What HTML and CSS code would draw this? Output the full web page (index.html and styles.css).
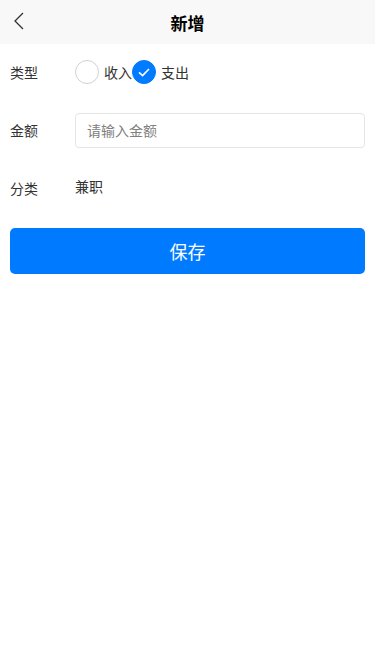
FILE: index.html
```html
<!DOCTYPE html>
<html lang="zh-CN">
<head>
  <meta charset="UTF-8" />
  <meta name="viewport" content="width=device-width, initial-scale=1.0"/>
  <title>新增</title>
  <link rel="stylesheet" href="styles.css">
</head>
<body>
  <header class="nav-bar">
    <a class="nav-back" href="#">
      <svg width="14" height="18" viewBox="0 0 14 18"><path d="M11 1 L3 9 L11 17" fill="none" stroke="#333" stroke-width="1.3"/></svg>
    </a>
    <div class="nav-title">新增</div>
  </header>

  <form class="add-form">
    <div class="form-row">
      <div class="form-label">类型</div>
      <div class="radio-group">
        <label class="radio">
          <span class="radio-circle"></span>
          <span>收入</span>
        </label>
        <label class="radio checked">
          <span class="radio-circle">
            <svg width="16" height="16" viewBox="0 0 16 16"><path d="M3 8.3 L6.6 11.6 L13 5" fill="none" stroke="#fff" stroke-width="1.7"/></svg>
          </span>
          <span>支出</span>
        </label>
      </div>
    </div>

    <div class="form-row">
      <div class="form-label">金额</div>
      <input class="form-input" type="text" placeholder="请输入金额" />
    </div>

    <div class="form-row">
      <div class="form-label">分类</div>
      <div class="form-value">兼职</div>
    </div>

    <button type="button" class="save-btn">保存</button>
  </form>
</body>
</html>
```

FILE: styles.css
```css
* {
  margin: 0;
  padding: 0;
  box-sizing: border-box;
  font-family: "Noto Sans CJK SC", "Noto Sans", sans-serif;
}

body {
  background-color: #fff;
  color: #333;
}

.nav-bar {
  position: relative;
  height: 44px;
  background-color: #f8f8f8;
  display: flex;
  align-items: center;
  justify-content: center;
}

.nav-back {
  position: absolute;
  left: 12px;
  top: 12px;
  display: flex;
}

.nav-title {
  font-size: 17px;
  font-weight: bold;
  color: #000;
}

.add-form {
  padding: 6px 10px 0;
}

.form-row {
  display: flex;
  align-items: center;
  height: 44px;
  margin-bottom: 14px;
}

.form-label {
  width: 65px;
  font-size: 14px;
  color: #333;
}

.radio-group {
  display: flex;
  align-items: center;
}

.radio {
  display: flex;
  align-items: center;
  font-size: 14px;
  color: #333;
}

.radio-circle {
  width: 24px;
  height: 24px;
  border-radius: 50%;
  border: 1px solid #d1d1d1;
  margin-right: 5px;
  display: flex;
  align-items: center;
  justify-content: center;
}

.radio.checked .radio-circle {
  background-color: #007aff;
  border-color: #007aff;
}

.form-input {
  flex: 1;
  height: 35px;
  border: 1px solid #e5e5e5;
  border-radius: 4px;
  padding: 0 11px;
  font-size: 14px;
  color: #333;
  outline: none;
}

.form-input::placeholder {
  color: #808080;
}

.form-value {
  font-size: 14px;
  color: #333;
  margin-top: -4px;
}

.save-btn {
  width: 100%;
  height: 46px;
  margin-top: 4px;
  background-color: #007aff;
  color: #fff;
  border: none;
  border-radius: 5px;
  font-size: 18px;
}
```
